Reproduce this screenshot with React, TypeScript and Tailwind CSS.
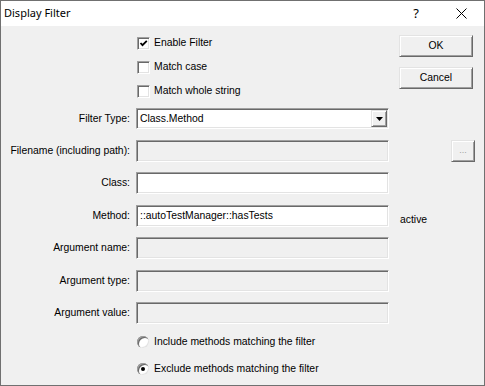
import type { ReactNode } from 'react';

// ── 3D borders (Windows classic look) ─────────────────────────────────────────
const SUNKEN =
  'border border-t-[#a0a0a0] border-l-[#a0a0a0] border-r-white border-b-white shadow-[inset_1px_1px_0_#696969,inset_-1px_-1px_0_#e3e3e3]';
const RAISED =
  'border border-t-[#e3e3e3] border-l-[#e3e3e3] border-r-[#696969] border-b-[#696969] shadow-[inset_1px_1px_0_#ffffff,inset_-1px_-1px_0_#a0a0a0]';

// ── 체크박스 ──────────────────────────────────────────────────────────────────
const CheckRow = ({ label, checked }: { label: string; checked?: boolean }) => (
  <div className="flex items-center h-[24px]">
    <div className={`w-[13px] h-[13px] bg-white flex items-center justify-center ${SUNKEN}`}>
      {checked && (
        <svg width="9" height="9" viewBox="0 0 9 9">
          <path d="M1.5 4 L3.5 6.2 L7.8 1.8" fill="none" stroke="#000" strokeWidth="1.8" />
        </svg>
      )}
    </div>
    <span className="ml-[4px]">{label}</span>
  </div>
);

// ── 라디오 ────────────────────────────────────────────────────────────────────
const RadioRow = ({ label, checked, className }: { label: string; checked?: boolean; className: string }) => (
  <div className={`flex items-center h-[24px] pl-[136px] ${className}`}>
    <div className="w-[12px] h-[12px] rounded-full bg-white shadow-[inset_1px_1px_0_#a0a0a0,inset_2px_2px_0_#696969,inset_-1px_-1px_0_#e3e3e3] flex items-center justify-center">
      {checked && <div className="w-[4px] h-[4px] rounded-full bg-black" />}
    </div>
    <span className="ml-[5px]">{label}</span>
  </div>
);

// ── 입력 행 ───────────────────────────────────────────────────────────────────
const FieldRow = ({
  label,
  value,
  enabled,
  className,
  children,
}: {
  label: string;
  value?: string;
  enabled?: boolean;
  className: string;
  children?: ReactNode;
}) => (
  <div className={`flex items-center h-[22px] ${className}`}>
    <div className="w-[129px] shrink-0 text-right">{label}</div>
    <div
      className={`ml-[6px] w-[253px] h-[22px] shrink-0 flex items-center pl-[3px] ${SUNKEN} ${
        enabled ? 'bg-white' : 'bg-[#f0f0f0]'
      }`}
    >
      {value}
    </div>
    {children}
  </div>
);

const PushButton = ({ label, className }: { label: string; className: string }) => (
  <div className={`w-[74px] h-[22px] bg-[#f0f0f0] flex items-center justify-center ${RAISED} ${className}`}>
    {label}
  </div>
);

// ── 메인 ──────────────────────────────────────────────────────────────────────
const App = () => (
  <div className="w-[485px] h-[386px] border border-[#707070] bg-[#f0f0f0] flex flex-col text-black text-[10.4px] font-['Liberation_Sans',Arial,sans-serif] overflow-hidden">
    {/* 타이틀 바 */}
    <div className="h-[25px] bg-white flex items-center shrink-0 font-['Noto_Sans',sans-serif] text-[11px]">
      <span className="ml-[3px]">Display Filter</span>
      <span className="ml-auto mr-[37px] text-[13px]">?</span>
      <svg width="11" height="11" viewBox="0 0 11 11" className="mr-[17px]">
        <path d="M0.5 0.5 L10.5 10.5 M10.5 0.5 L0.5 10.5" stroke="#000" strokeWidth="1" />
      </svg>
    </div>

    {/* 상단: 체크박스 + 버튼 */}
    <div className="flex">
      <div className="flex flex-col pt-[5px] pl-[136px]">
        <CheckRow label="Enable Filter" checked />
        <CheckRow label="Match case" />
        <CheckRow label="Match whole string" />
      </div>
      <div className="ml-auto mr-[11px] flex flex-col">
        <PushButton label="OK" className="mt-[9px]" />
        <PushButton label="Cancel" className="mt-[10px]" />
      </div>
    </div>

    {/* Filter Type */}
    <div className="flex items-center h-[21px] mt-[5px]">
      <div className="w-[129px] shrink-0 text-right">Filter Type:</div>
      <div className={`ml-[6px] w-[253px] h-[21px] bg-white flex items-center pl-[3px] ${SUNKEN}`}>
        <span className="flex-1">Class.Method</span>
        <div className={`w-[16px] h-[17px] mr-[1px] bg-[#f0f0f0] flex items-center justify-center ${RAISED}`}>
          <svg width="7" height="4" viewBox="0 0 7 4">
            <path d="M0 0 H7 L3.5 4 Z" fill="#000" />
          </svg>
        </div>
      </div>
    </div>

    <FieldRow label="Filename (including path):" className="mt-[11px]">
      <div className={`ml-[62px] w-[24px] h-[22px] bg-[#f0f0f0] flex items-center justify-center text-[#a0a0a0] text-[9px] ${RAISED}`}>
        ...
      </div>
    </FieldRow>
    <FieldRow label="Class:" enabled className="mt-[10px]" />
    <FieldRow label="Method:" enabled value="::autoTestManager::hasTests" className="mt-[11px]">
      <span className="ml-[11px] mt-[7px]">active</span>
    </FieldRow>
    <FieldRow label="Argument name:" className="mt-[10px]" />
    <FieldRow label="Argument type:" className="mt-[11px]" />
    <FieldRow label="Argument value:" className="mt-[10px]" />

    <RadioRow label="Include methods matching the filter" className="mt-[6px]" />
    <RadioRow label="Exclude methods matching the filter" checked className="mt-[3px]" />
  </div>
);

export default App;
